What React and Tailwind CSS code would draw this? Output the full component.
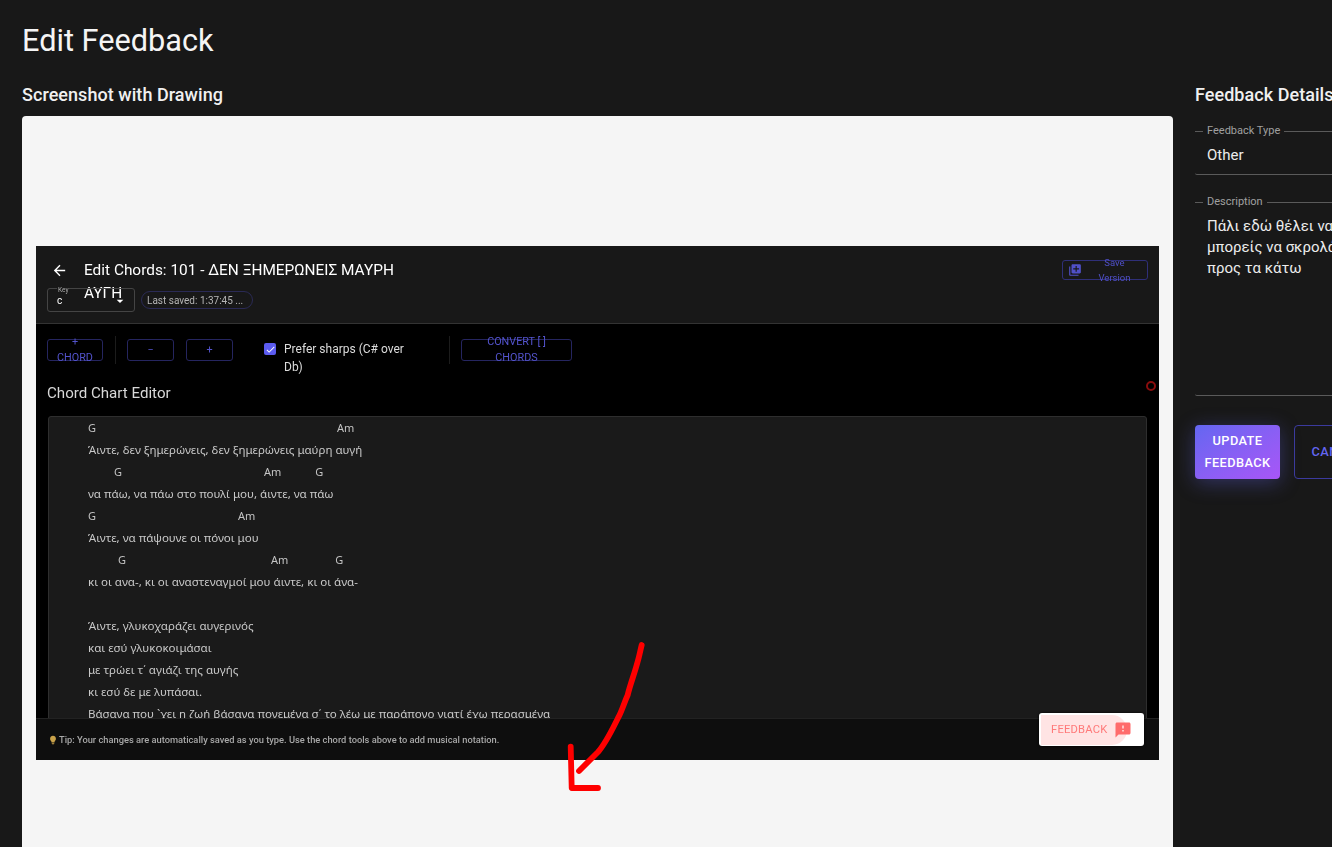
import { MdArrowBack, MdArrowDropDown, MdFeedback, MdLibraryAdd, MdLightbulb, MdCheck } from 'react-icons/md';

function ToolButton({ className, children }) {
  return (
    <div className={`h-[22px] shrink-0 flex flex-col items-center justify-center border border-[#25255f] rounded-[3px] text-[10.8px] leading-[16.5px] text-[#5353cc] text-center whitespace-nowrap ${className}`}>
      {children}
    </div>
  );
}

function ChordRow({ children }) {
  return <div className="h-[22px] pt-px flex items-center text-[11px] text-[#c4c4c4] font-['Noto_Sans',sans-serif]">{children}</div>;
}

function LyricRow({ children }) {
  return <div className="h-[22px] flex items-center text-[11.55px] text-[#c8c8c8] whitespace-nowrap font-['Noto_Sans',sans-serif]">{children}</div>;
}

function ChordEditor() {
  return (
    <div className="mx-[12px] mt-[14px] h-[320px] bg-[#1a1a1a] border border-[#2e2e2e] rounded-[3px] pl-[39px] overflow-hidden">
      <ChordRow><span>G</span><span className="ml-[241px]">Am</span></ChordRow>
      <LyricRow>Άιντε, δεν ξημερώνεις, δεν ξημερώνεις μαύρη αυγή</LyricRow>
      <ChordRow><span className="ml-[26px]">G</span><span className="ml-[142px]">Am</span><span className="ml-[34px]">G</span></ChordRow>
      <LyricRow>να πάω, να πάω στο πουλί μου, άιντε, να πάω</LyricRow>
      <ChordRow><span>G</span><span className="ml-[142px]">Am</span></ChordRow>
      <LyricRow>Άιντε, να πάψουνε οι πόνοι μου</LyricRow>
      <ChordRow><span className="ml-[30px]">G</span><span className="ml-[145px]">Am</span><span className="ml-[47px]">G</span></ChordRow>
      <LyricRow>κι οι ανα-, κι οι αναστεναγμοί μου άιντε, κι οι άνα-</LyricRow>
      <div className="h-[22px]" />
      <LyricRow>Άιντε, γλυκοχαράζει αυγερινός</LyricRow>
      <LyricRow>και εσύ γλυκοκοιμάσαι</LyricRow>
      <LyricRow>με τρώει τ΄ αγιάζι της αυγής</LyricRow>
      <LyricRow>κι εσύ δε με λυπάσαι.</LyricRow>
      <LyricRow>Βάσανα που `χει η ζωή βάσανα πονεμένα σ΄ το λέω με παράπονο γιατί έχω περασμένα</LyricRow>
    </div>
  );
}

function ChordScreenshot() {
  return (
    <div className="relative w-[1123px] h-[514px] bg-black overflow-hidden font-['Roboto',sans-serif] blur-[0.35px]">
      <div className="h-[78px] bg-[#181818] border-b border-[#333] px-[11px] pt-[12px]">
        <div className="flex items-start h-[30px]">
          <MdArrowBack className="text-white text-[17px] ml-[4px] mt-[4px] shrink-0" />
          <div className="ml-[16px] mt-px w-[330px] text-[15.4px] leading-[23px] text-white">Edit Chords: 101 - ΔΕΝ ΞΗΜΕΡΩΝΕΙΣ ΜΑΥΡΗ ΑΥΓΗ</div>
          <div className="ml-auto mt-[2px] w-[86px] h-[20px] border border-[#2f2f78] rounded-[3px] flex items-center pl-[5px] text-[#5050c8]">
            <MdLibraryAdd className="text-[14px] shrink-0" />
            <div className="flex-1 text-center text-[9.5px] leading-[15.5px]">Save<br />Version</div>
          </div>
        </div>
        <div className="flex items-center gap-[6px]">
          <div className="relative w-[88px] h-[24px] border border-[#444] rounded-[3px] pl-[9px] pt-[5px] text-[10px] leading-[14px] text-white">
            c
            <span className="absolute left-[9px] -top-[3px] text-[6.5px] leading-[8px] text-[#aaa] bg-[#181818] px-px">Key</span>
            <MdArrowDropDown className="absolute left-[64px] top-[4px] text-white text-[16px]" />
          </div>
          <div className="w-[112px] h-[18px] border border-[#2a2a55] rounded-full flex items-center pl-[5px] text-[10px] text-[#b5b5b5] whitespace-nowrap">Last saved: 1:37:45 ...</div>
        </div>
      </div>

      <div className="relative flex items-start pl-[11px] pt-[15px] h-[56px]">
        <ToolButton className="w-[56px]"><span>+</span><span>CHORD</span></ToolButton>
        <div className="w-px h-[28px] -mt-[3px] ml-[12px] mr-[11px] bg-[#1c1c1c]" />
        <ToolButton className="w-[47px] mr-[12px]">−</ToolButton>
        <ToolButton className="w-[47px]">+</ToolButton>
        <div className="ml-[31px] mt-[4px] w-[12px] h-[12px] shrink-0 rounded-[2px] bg-[#5b5bf0] flex items-center justify-center">
          <MdCheck className="text-white text-[11px]" />
        </div>
        <div className="ml-[8px] w-[130px] mt-px shrink-0 text-[12px] leading-[18px] text-[#dcdcdc]">Prefer sharps (C# over Db)</div>
        <div className="w-px h-[28px] -mt-[3px] ml-[35px] mr-[11px] bg-[#1c1c1c]" />
        <ToolButton className="w-[111px]"><span>CONVERT [ ]</span><span>CHORDS</span></ToolButton>
      </div>

      <div className="pl-[11px] pt-[4px] text-[15.1px] leading-[18px] text-[#d8d8d8]">Chord Chart Editor</div>
      <ChordEditor />

      <div className="absolute left-[1110px] top-[135px] w-[10px] h-[10px] rounded-full border-2 border-[#8a0d0d]" />

      {/* bottom tip bar */}
      <div className="absolute left-0 right-0 bottom-0 h-[42px] bg-[#0e0e0e] border-t border-[#222] flex items-center pl-[12px] pt-px">
        <MdLightbulb className="text-[#c9a24a] text-[10px] shrink-0" />
        <span className="ml-px text-[9.3px] font-medium text-[#a8a8a8] whitespace-nowrap">Tip: Your changes are automatically saved as you type. Use the chord tools above to add musical notation.</span>
      </div>
      <div className="absolute left-[1003px] top-[467px] w-[105px] h-[33px] bg-white rounded-[3px] overflow-hidden shadow-[0_0_3px_#000] flex items-center pl-[12px] pt-px">
        <div className="absolute left-[2px] top-[2px] w-[86px] h-[30px] rounded-r-[16px] bg-[#ffe4e4]" />
        <span className="relative text-[11.2px] tracking-[0.2px] text-[#ff7a7a]">FEEDBACK</span>
        <MdFeedback className="relative ml-[7px] text-[#ff6b6b] text-[18px]" />
      </div>
    </div>
  );
}

function RedArrow() {
  return (
    <svg className="absolute left-[523px] top-[519px]" width="110" height="170" viewBox="545 635 110 170" fill="none" stroke="#f00" strokeWidth="5.8" strokeLinecap="round" strokeLinejoin="round">
      <path d="M641.7 645 C640 652 639 658 636.7 665 C634 675 630 685 627.7 695 C624 703 622 711 618 718 C612 730 606 743 598 752 C591 759 585 765 579 771" />
      <path d="M570.7 746.7 L571.7 788 L598 788" />
    </svg>
  );
}

function OutlinedField({ label, className, children }) {
  return (
    <div className={`border-b border-[#5a5a5a] rounded-b-[2px] ${className}`}>
      <div className="flex items-center h-[12px] text-[11px] text-[#a0a0a0]">
        <div className="w-[8px] h-px bg-[#5a5a5a]" />
        <span className="px-[4px]">{label}</span>
        <div className="flex-1 h-px bg-[#5a5a5a]" />
      </div>
      <div className="pl-[12px] pt-[8px] text-[15px] leading-[21px] text-[#ececec] whitespace-nowrap">{children}</div>
    </div>
  );
}

export default function App() {
  return (
    <div className="w-[1332px] h-[847px] overflow-hidden bg-[#181818] font-['Roboto',sans-serif] text-white">
      <div className="w-[1700px] pl-[22px]">
        <h1 className="pt-[21px] text-[30.7px] leading-[40px] font-normal text-[#f5f5f5]">Edit Feedback</h1>
        <div className="flex gap-[22px] mt-[21px]">
          <div className="w-[1151px] shrink-0">
            <h2 className="text-[18px] leading-[26px] font-medium tracking-[0.05px] text-[#f0f0f0]">Screenshot with Drawing</h2>
            <div className="relative mt-[8px] h-[800px] bg-[#f5f5f5] rounded-[4px] flex justify-center pt-[130px]">
              <ChordScreenshot />
              <RedArrow />
            </div>
          </div>

          <div className="w-[420px] shrink-0">
            <h2 className="text-[18px] leading-[26px] font-medium tracking-[0.05px] text-[#f0f0f0]">Feedback Details</h2>
            <OutlinedField label="Feedback Type" className="mt-[17px] h-[50px]">Other</OutlinedField>
            <OutlinedField label="Description" className="mt-[21px] h-[200px]">
              Πάλι εδώ θέλει να φαίνεται όλο<br />μπορείς να σκρολάρεις<br />προς τα κάτω
            </OutlinedField>
            <div className="flex gap-[14px] mt-[29px]">
              <div className="w-[85px] h-[54px] flex items-center justify-center text-center rounded-[4px] bg-gradient-to-br from-[#6366f1] to-[#a855f7] shadow-[0_4px_20px_rgba(99,102,241,0.35)] text-[12.8px] leading-[22px] font-medium tracking-[0.4px] text-white">UPDATE FEEDBACK</div>
              <div className="w-[86px] h-[54px] flex items-center justify-center rounded-[4px] border border-[#3b3a9e] text-[12.8px] font-medium tracking-[0.4px] text-[#6366f1]">CANCEL</div>
            </div>
          </div>
        </div>
      </div>
    </div>
  );
}
